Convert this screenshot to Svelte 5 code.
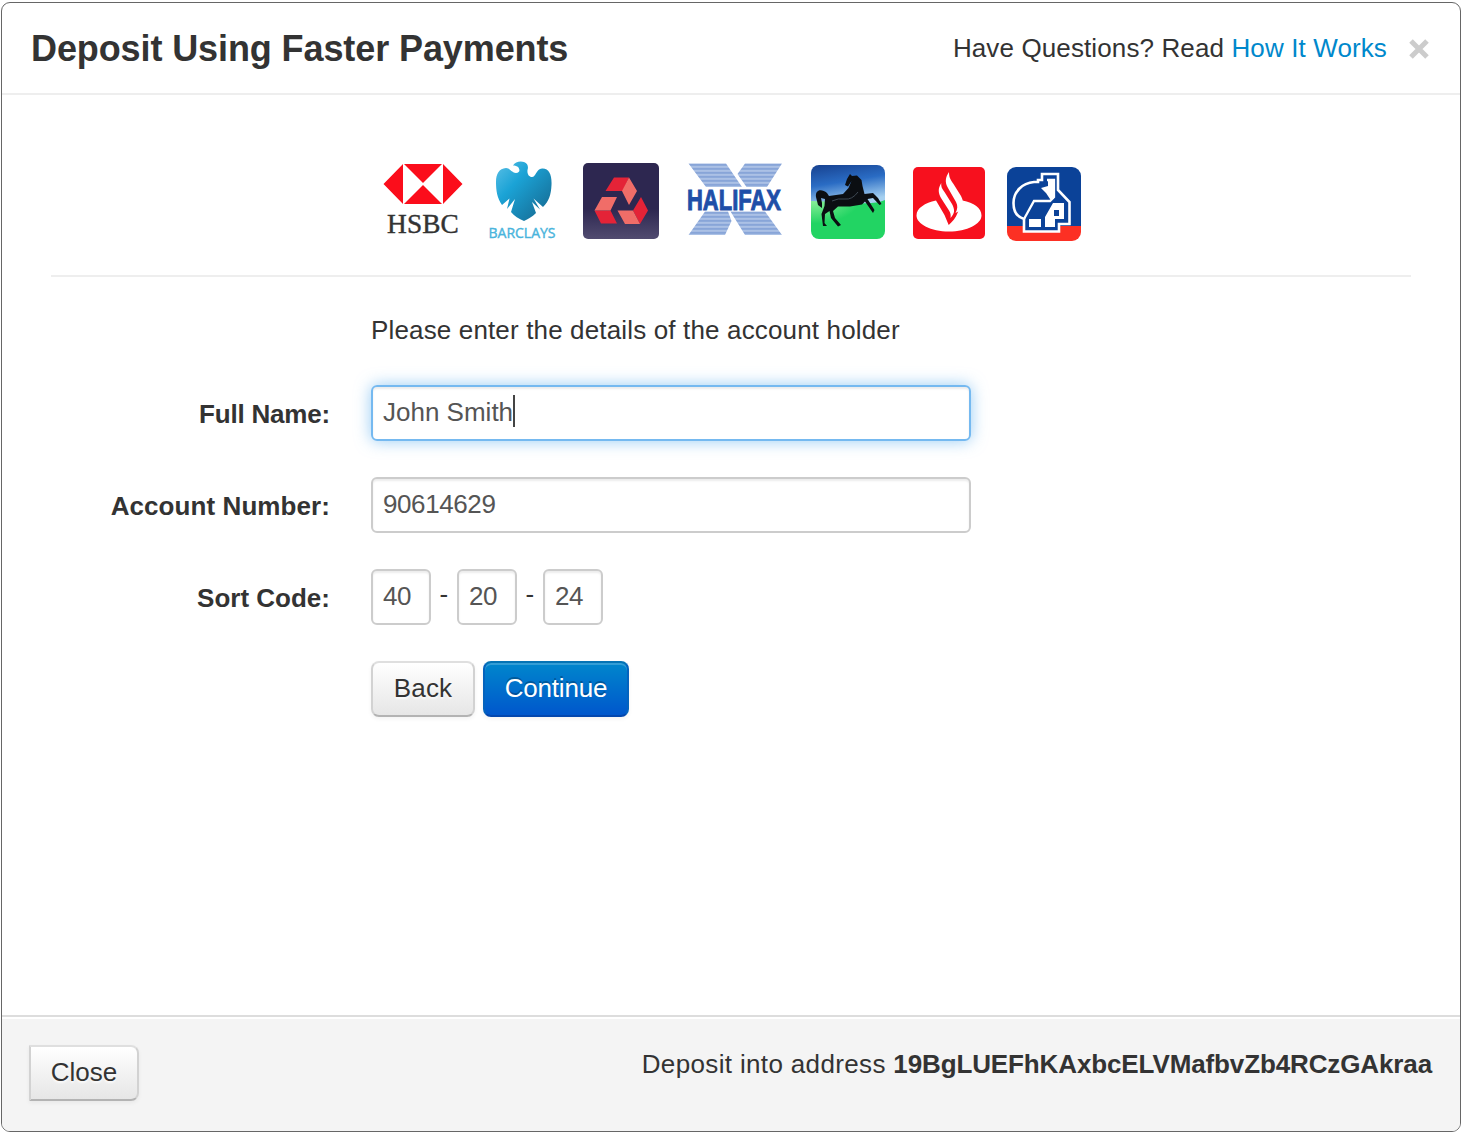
<script>
  let fullName = $state('John Smith');
  let account = $state('90614629');
  let sort = $state(['40', '20', '24']);
</script>

<div class="modal">
  <header>
    <h1>Deposit Using Faster Payments</h1>
    <p class="help">Have Questions? Read <a href="#how">How It Works</a></p>
    <button class="dismiss" aria-label="Dismiss">
      <svg width="20" height="20" viewBox="0 0 20 20"><path d="M2 2 18 18M18 2 2 18" stroke="#ccc" stroke-width="5" /></svg>
    </button>
  </header>

  <main>
    <svg class="banks" width="700" height="84" viewBox="383 159 700 84">
      <defs>
        <linearGradient id="eagle" x1="0" y1="0" x2="1" y2="1">
          <stop offset="0" stop-color="#5cc0e6" /><stop offset=".35" stop-color="#1ba3d6" /><stop offset="1" stop-color="#15638a" />
        </linearGradient>
        <linearGradient id="plum" x1="0" y1="0" x2="0" y2="1">
          <stop offset="0" stop-color="#2d2750" /><stop offset=".6" stop-color="#2d2750" /><stop offset="1" stop-color="#514b70" />
        </linearGradient>
        <linearGradient id="sky" x1="0" y1="0" x2=".3" y2="1">
          <stop offset="0" stop-color="#17418f" /><stop offset=".5" stop-color="#2a6cc4" /><stop offset="1" stop-color="#a5d0f0" />
        </linearGradient>
        <radialGradient id="grass" cx=".05" cy="0" r=".6">
          <stop offset="0" stop-color="#8df09a" /><stop offset="1" stop-color="#22d463" />
        </radialGradient>
        <pattern id="stripes" x="0" y="163.500" width="8" height="4" patternUnits="userSpaceOnUse">
          <rect width="8" height="4" fill="#c3d3ed" /><rect width="8" height="2.800" fill="#88a5d8" />
        </pattern>
        <clipPath id="lloydsClip"><rect x="811" y="165" width="74" height="74" rx="8" /></clipPath>
        <clipPath id="nationClip"><rect x="1007" y="167" width="74" height="74" rx="9" /></clipPath>
      </defs>

      <g>
        <path fill="#fb0d1b" d="M383.5 184 403 164V204ZM462.500 184 443 164V204ZM404 164H442L423 183ZM404 204H442L423 185Z" />
        <text x="387" y="232.500" class="serif" textLength="72" lengthAdjust="spacingAndGlyphs">HSBC</text>
      </g>

      <g>
        <path fill="url(#eagle)" d="M513 165.500C515 162 520 160.500 524 162C528 163.500 528.500 167 527.500 170C527 174 529 177 532 177C536 177 536 169 542 168.500C549 168 552 175 551.500 185C551 195 549 201 543 207L533.500 198.500L540 209.500L532 202L536 213C532 217 528 219 524 221C519 219 514 216 511 212L515 199L507 209L509.500 198.500L502 205C497 198 496 190 496 182C496 174 499 168.500 506 168C510 168 511 172 516 173C520 173 520 170 518.500 167.500C517 166 515 165.500 513 165.500Z" />
        <text x="488.500" y="238" class="barclays" textLength="67" lengthAdjust="spacingAndGlyphs">BARCLAYS</text>
      </g>

      <g>
        <rect x="583" y="163" width="76" height="76" rx="5" fill="url(#plum)" />
        <path fill="#e42337" d="M614 177.500H629L623 191H605.500ZM594.500 210.500 601 223.500H617L610.500 210.500ZM641 197 648 210.500 640 224 633 210.500Z" />
        <path fill="#f06d68" d="M629 177.500 637 191 629 205 622 191ZM602 197H617L610.500 210.500H594.500ZM617.500 210.500H633L640 224H625Z" />
      </g>

      <g>
        <path fill="url(#stripes)" d="M688.500 163.500H726L742 187H706ZM745 163.500H782L767 187H746.500L737.500 174ZM705 211.500H728L731.500 221L725 235H688.500ZM730.500 211.500H765L782 235H745Z" />
        <text x="687" y="210" class="halifax" textLength="94" lengthAdjust="spacingAndGlyphs">HALIFAX</text>
      </g>

      <g clip-path="url(#lloydsClip)">
        <rect x="811" y="165" width="74" height="40" fill="url(#sky)" />
        <path d="M811 201Q845 202 860 203T885 200V239H811Z" fill="url(#grass)" />
        <path fill="#0b0e12" d="M850 174L852 176L857 175.500L861.500 180L862.500 186L864.500 194L873 193L878 198L881.500 204L879.500 205L873 198L867.500 199L874.500 210L873 213L865 201.500L862 204.500L850 206.500L838 206.500L833 211L835 218L841 225L838 226.500L831 218L829.500 211L825 214L824.500 223L827 226L823 226L821.500 214L824.500 206L825 199L821 198L822 203L822 208L818 205L816 197C815 189 822 188.500 827 193L829 196L843 194L848.500 188L851.500 181L848 186.500L845 185L847 179Z" />
        <path d="M832 201Q838 198 845 199T858 192" stroke="#3d4853" fill="none" />
      </g>

      <g>
        <rect x="913" y="167" width="72" height="72" rx="5" fill="#f7101e" />
        <path fill="#fff" d="M936 200.500C925 203 916.500 208 916.500 215.500C916.500 224 931 231.500 949 231.500S981.500 224 981.500 215.500C981.500 208 974 202.500 962.500 200.500L957.500 213C956 218 952 222 948.700 225L944.500 215Z" />
        <path fill="#fff" d="M949 172C945.500 177 944.500 182 948 188L956 202C958 206 957.500 209 955.500 213L961 210C964 206 964 202 961 196L953.500 184C950 179 949 177 949 172ZM941.300 183C937.500 189 938.500 193 941 198L949 210.500C950.500 213 951 215 950.500 218C955 213 955 210 952 204L944.500 192C941.500 188 941 186 941.300 183Z" />
      </g>

      <g clip-path="url(#nationClip)">
        <rect x="1007" y="167" width="74" height="60" fill="#0b4298" />
        <rect x="1007" y="226" width="74" height="15" fill="#fc3024" />
        <path fill="#0b4298" stroke="#fff" stroke-width="2.600" d="M1042 174H1058V190L1069.500 202V224H1059V231.500H1024V219C1017 217 1013.500 211 1013.500 203C1013.500 192 1022 183 1034 182H1038V180H1042Z" />
        <path fill="none" stroke="#fff" stroke-width="2.300" d="M1024 219 1034 201H1050L1054 197V180H1047" />
        <path fill="#fff" d="M1048 179H1054V199H1050L1046 193 1041 188 1048 186ZM1029 219H1041V227H1029ZM1045 227V217L1053 203H1064V219H1055V227Z" />
        <path fill="#0b4298" d="M1054 210H1059V216H1054Z" />
      </g>
    </svg>

    <form>
      <p class="lead">Please enter the details of the account holder</p>
      <label class="l1" for="name">Full Name:</label>
      <div class="field focused"><span id="name">{fullName}</span><i class="caret"></i></div>
      <label class="l2" for="acct">Account Number:</label>
      <div class="field digits"><span id="acct">{account}</span></div>
      <label class="l3" for="sort">Sort Code:</label>
      <div class="codes" id="sort">
        {#each sort as part, i}
          {#if i}<span class="dash">-</span>{/if}
          <div class="field small digits">{part}</div>
        {/each}
      </div>
      <div class="actions">
        <button type="button" class="btn back">Back</button>
        <button type="button" class="btn primary">Continue</button>
      </div>
    </form>
  </main>

  <footer>
    <button class="btn close">Close</button>
    <p>Deposit into address <strong>19BgLUEFhKAxbcELVMafbvZb4RCzGAkraa</strong></p>
  </footer>
</div>

<style>
  :global(body) { background: #fff; }
  * { box-sizing: border-box; }
  .modal {
    width: 1460px; height: 1130px; margin: 2px 0 0 1px;
    display: flex; flex-direction: column; overflow: hidden;
    border: 1px solid #666; border-radius: 9px; background: #fff;
    font: 26px/40px "Liberation Sans", Arial, sans-serif; letter-spacing: .15px; color: #333;
  }
  h1, p { margin: 0; font-weight: 400; }
  header { height: 92px; flex: none; display: flex; align-items: flex-start; padding: 25px 31px 0 29px; border-bottom: 2px solid #eee; }
  h1 { padding-top: 1px; font-size: 36px; font-weight: 700; letter-spacing: -.1px; flex: 1; }
  .help { letter-spacing: .12px; }
  a { color: #0088cc; text-decoration: none; }
  button { font: inherit; letter-spacing: inherit; color: inherit; }
  .dismiss { border: 0; padding: 11px 0 0; margin-left: 22px; background: none; line-height: 0; }
  main { flex: 1; padding: 64px 49px 0; }
  .banks { display: block; margin-left: 332px; }
  .serif { font: 27px "Liberation Serif", serif; fill: #333; stroke: #333; stroke-width: .4; }
  .barclays { font: 14px "Open Sans", sans-serif; fill: #49b4dc; stroke: #49b4dc; stroke-width: .4; letter-spacing: 0; }
  .halifax { font: 700 30px "Liberation Sans", sans-serif; fill: #1e4fa8; stroke: #1e4fa8; letter-spacing: 0; }
  form { margin-top: 32px; border-top: 2px solid #eee; padding-top: 33px; display: grid; grid-template-columns: 279px 600px; column-gap: 41px; row-gap: 36px; }
  .lead, .actions { grid-column: 2; }
  .lead { height: 39px; }
  label { font-weight: 700; text-align: right; line-height: 56px; padding-top: 1px; height: 56px; }
  .l1 { letter-spacing: -.2px; }
  .l2 { letter-spacing: .08px; }
  .l3 { letter-spacing: 0; }
  .field { width: 600px; height: 56px; display: flex; align-items: center; padding: 0 10px 2px; border: 2px solid #ccc; border-radius: 6px; color: #555; box-shadow: inset 0 2px 2px rgba(0, 0, 0, .075); }
  .focused { letter-spacing: 0; border-color: #75b9f0; box-shadow: inset 0 2px 2px rgba(0, 0, 0, .075), 0 0 16px rgba(82, 168, 236, .6); }
  .digits { letter-spacing: -.4px; }
  .caret { width: 2px; height: 32px; margin-top: -2px; background: #444; }
  .codes { display: flex; line-height: 50px; }
  .small { width: 60px; }
  .dash { width: 26px; text-align: center; }
  .actions { display: flex; gap: 8px; }
  .btn { height: 56px; padding: 0 0 2px; border: 2px solid #d9d9d9; border-color: #dfdfdf #d2d2d2 #b3b3b3; border-radius: 8px; background: linear-gradient(#fff, #e6e6e6); box-shadow: 0 2px 4px rgba(0, 0, 0, .05); text-shadow: 0 2px 2px rgba(255, 255, 255, .75); }
  .back { width: 104px; }
  .primary { width: 146px; letter-spacing: -.2px; color: #fff; border-color: #0473b5 #0463bd #0347ae; background: linear-gradient(#0088cc, #0055cc); background-origin: border-box; box-shadow: inset 0 2px 0 rgba(255, 255, 255, .2), 0 2px 4px rgba(0, 0, 0, .05); text-shadow: 0 -2px 0 rgba(0, 0, 0, .25); }
  footer { height: 116px; flex: none; display: flex; justify-content: space-between; padding: 28px 28px 0 27px; border-top: 2px solid #ddd; box-shadow: inset 0 2px 0 #fff; background: #f4f4f4; }
  .close { width: 110px; letter-spacing: 0; border-radius: 0 8px 8px 0; }
  footer p { line-height: 38px; letter-spacing: .35px; }
  strong { letter-spacing: -.12px; }
</style>
